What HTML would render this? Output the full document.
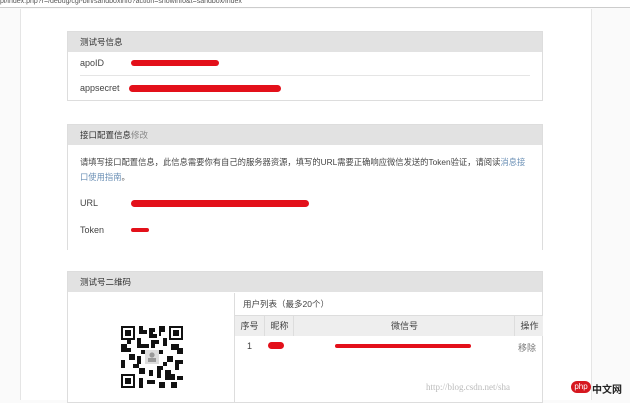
<!DOCTYPE html><html><head><meta charset="utf-8"><style>
body{margin:0;width:630px;height:400px;overflow:hidden;background:#fafafa;font-family:"Liberation Sans","Noto Sans CJK SC",sans-serif;position:relative;font-size:9px;color:#444}
.a{position:absolute}
.p{position:absolute;left:67px;width:474px;border:1px solid #ddd;background:#fff}
.h{background:#e2e2e2;height:20px;line-height:20px;padding-left:12px;font-size:8.5px;color:#333}
.red{position:absolute;background:#e3101a;border-radius:6px;height:5px}
.c{position:absolute;top:0;height:20px;line-height:20px;text-align:center;border-left:1px solid #ddd}
</style></head><body>
<div class="a" style="left:0;top:0;width:630px;height:7px;background:#fff;border-bottom:1px solid #ccc;font-size:7px;line-height:4px;color:#555">pi/index.php?r=/debug/cgi-bin/sandboxinfo?action=showinfo&amp;t=sandbox/index</div>
<div class="a" style="left:20px;top:9px;width:570px;height:391px;background:#fff;border-left:1px solid #e5e5e5;border-right:1px solid #e5e5e5"></div>

<div class="p" style="top:31px;height:68px"><div class="h">测试号信息</div>
<div class="a" style="left:12px;top:26px">apoID</div>
<div class="red" style="left:63px;top:28px;width:88px;height:6px"></div>
<div class="a" style="left:12px;top:43px;width:450px;border-top:1px solid #e5e5e5"></div>
<div class="a" style="left:12px;top:51px">appsecret</div>
<div class="red" style="left:61px;top:53px;width:152px;height:7px"></div>
</div>

<div class="p" style="top:124px;height:125px;border-bottom:none"><div class="h">接口配置信息<span style="color:#888">修改</span></div>
<div class="a" style="left:12px;top:30px;width:448px;line-height:15px;font-size:8.3px">请填写接口配置信息，此信息需要你有自己的服务器资源，填写的URL需要正确响应微信发送的Token验证，请阅读<span style="color:#6a8fb5">消息接口使用指南</span>。</div>
<div class="a" style="left:12px;top:73px">URL</div>
<div class="red" style="left:63px;top:75px;width:178px;height:7px"></div>
<div class="a" style="left:12px;top:100px">Token</div>
<div class="red" style="left:63px;top:103px;width:18px;height:4px"></div>
</div>

<div class="p" style="top:271px;height:130px"><div class="h">测试号二维码</div>
<div class="a" style="left:166px;top:21px;width:308px;height:109px;border-left:1px solid #ddd">
<div class="a" style="left:8px;top:5px;font-size:8.5px">用户列表（最多20个）</div>
<div class="a" style="left:0;top:22px;width:308px;height:20px;background:#eee;border-top:1px solid #ddd">
<div class="c" style="left:0;width:29px;border-left:none">序号</div>
<div class="c" style="left:29px;width:29px">昵称</div>
<div class="c" style="left:58px;width:221px">微信号</div>
<div class="c" style="left:279px;width:29px">操作</div>
</div>
<div class="a" style="left:12px;top:48px">1</div>
<div class="red" style="left:33px;top:49px;width:16px;height:7px"></div>
<div class="red" style="left:100px;top:51px;width:136px;height:4px"></div>
<div class="a" style="left:283px;top:48px;color:#777">移除</div>
</div>
<svg class="a" style="left:53px;top:54px" width="62" height="62" viewBox="0 0 31 31">
<rect width="31" height="31" fill="#fff"/>
<g fill="#111">
<rect x="0" y="0" width="7" height="7"/><rect x="24" y="0" width="7" height="7"/><rect x="0" y="24" width="7" height="7"/>
</g>
<g fill="#fff"><rect x="1" y="1" width="5" height="5"/><rect x="25" y="1" width="5" height="5"/><rect x="1" y="25" width="5" height="5"/></g>
<g fill="#111"><rect x="2" y="2" width="3" height="3"/><rect x="26" y="2" width="3" height="3"/><rect x="2" y="26" width="3" height="3"/>
<path d="M9 0h2v2h2v2h-4zM14 1h3v2h-1v3h-2zM19 0h3v3h-2v2h-1zM8 6h2v3h3v2H8zM15 7h4v2h-2v2h-2zM21 6h2v4h-2zM0 9h3v2h2v2H0zM25 9h4v2h2v3h-3v-2h-3zM4 14h3v3H4zM0 17h2v4H0zM23 15h3v3h-3zM27 17h4v2h-2v3h-2zM9 21h3v3H9zM14 22h2v3h-2zM18 20h3v2h-1v4h-2zM22 22h3v2h2v3h-5zM9 26h2v5H9zM13 27h4v2h-4zM19 28h3v3h-3zM25 28h3v3h-3zM28 25h3v2h-3zM10 12h2v2h-2zM19 12h2v2h-2zM8 15h2v4H8zM12 9h2v2h-2zM6 19h3v2H6zM21 18h2v2h-2zM3 7h2v2H3zM16 4h2v2h-2z"/></g>
<rect x="12" y="12" width="7" height="7" fill="#ddd"/><circle cx="15.5" cy="14.5" r="1.3" fill="#999"/><rect x="13.5" y="16" width="4" height="2" fill="#999"/>
</svg>
</div>

<div class="a" style="left:426px;top:382px;font-family:'Liberation Serif',serif;font-size:9px;color:#bbb">http://blog.csdn.net/sha</div>
<div class="a" style="left:571px;top:381px;width:20px;height:12px;border-radius:6px;background:#d6171f;color:#fff;font-size:8px;line-height:12px;text-align:center">php</div>
<div class="a" style="left:592px;top:381px;font-size:10px;color:#222;font-weight:bold">中文网</div>
</body></html>
